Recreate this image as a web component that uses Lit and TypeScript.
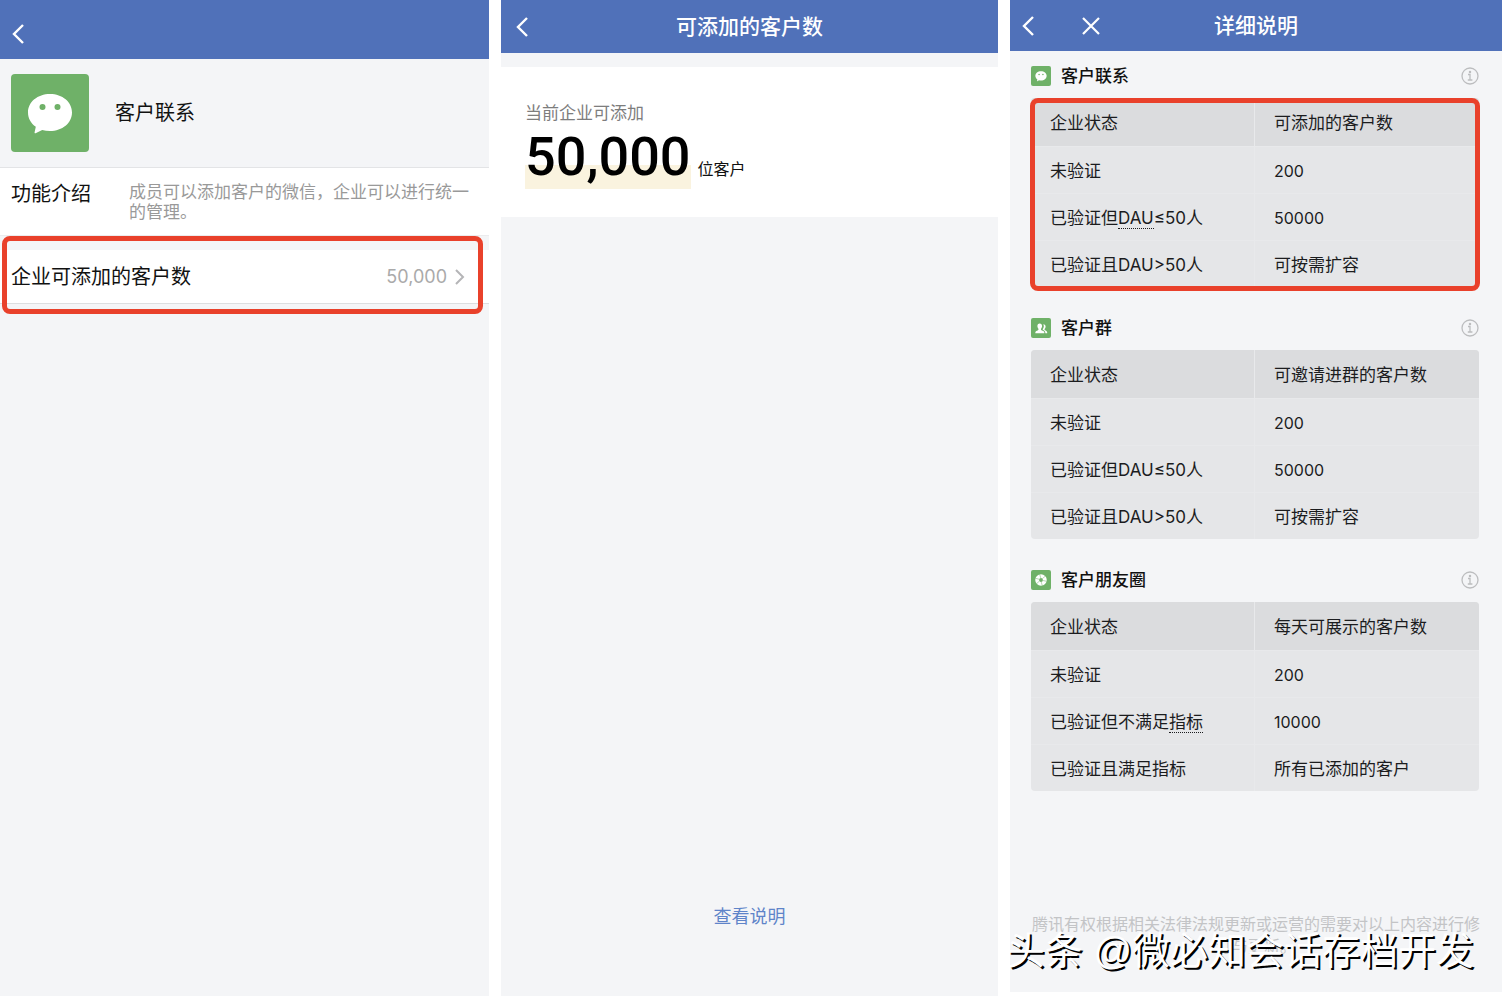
import { LitElement, html, svg, css } from "lit";
import { customElement, property } from "lit/decorators.js";

type Glyph = "chat" | "group" | "moments";

interface Quota {
  icon: Glyph;
  title: string;
  column: string;
  marked?: boolean;
  rows: { before: string; term?: string; after?: string; value: string }[];
}

const quotas: Quota[] = [
  {
    icon: "chat",
    title: "客户联系",
    column: "可添加的客户数",
    marked: true,
    rows: [
      { before: "未验证", value: "200" },
      { before: "已验证但", term: "DAU", after: "≤50人", value: "50000" },
      { before: "已验证且DAU>50人", value: "可按需扩容" },
    ],
  },
  {
    icon: "group",
    title: "客户群",
    column: "可邀请进群的客户数",
    rows: [
      { before: "未验证", value: "200" },
      { before: "已验证但DAU≤50人", value: "50000" },
      { before: "已验证且DAU>50人", value: "可按需扩容" },
    ],
  },
  {
    icon: "moments",
    title: "客户朋友圈",
    column: "每天可展示的客户数",
    rows: [
      { before: "未验证", value: "200" },
      { before: "已验证但不满足", term: "指标", value: "10000" },
      { before: "已验证且满足指标", value: "所有已添加的客户" },
    ],
  },
];

const glyphs = {
  chat: svg`
    <path fill="#fff" d="M39 20c12.400 0 22 8 22 18.500S51.400 57 39 57c-2.800 0-5.400-.4-7.800-1.100L24.600 59.200c-.7.300-1.200-.2-1-.9l1.200-5.500C19.900 49.400 17 44.300 17 38.500 17 28 26.600 20 39 20Z"/>
    <circle cx="31.500" cy="33" r="3" fill="#6fb168"/>
    <circle cx="46.500" cy="33" r="3" fill="#6fb168"/>`,
  group: svg`
    <path fill="#fff" d="M34 21c6 0 9 4 9 10 0 5-2 8-4 11v4c0 2 12 4 13 10v3H17v-3c1-6 12-8 12-10v-4c-2-3-4-6-4-11 0-6 3-10 9-10Z"/>
    <path fill="#fff" d="M48 24c6 0 9 4 9 9 0 4-2 7-4 10v3c0 2 9 4 10 9v4h-7c0-8-5-10-10-13v-3c2-3 4-6 4-11 0-3-1-6-2-8Z"/>`,
  moments: svg`
    <circle cx="39" cy="39" r="15" fill="none" stroke="#fff" stroke-width="15"/>
    <path stroke="#6fb168" stroke-width="2" d="M45 33 56 24M47 41l14 3M40 47l4 14M32 44 21 54M31 36l-14-4M38 31l-4-14"/>`,
};

const base = css`
  * {
    box-sizing: border-box;
  }
  button {
    display: flex;
    padding: 0;
    border: 0;
    background: none;
    color: inherit;
    font: inherit;
    cursor: pointer;
  }
  svg {
    display: block;
  }
`;

@customElement("app-glyph")
export class AppGlyph extends LitElement {
  @property() name: Glyph = "chat";

  static styles = css`
    :host {
      display: block;
      flex: none;
      width: 20px;
      height: 20px;
      border-radius: 2px;
      overflow: hidden;
      background: #6fb168;
    }
    svg {
      display: block;
      width: 100%;
      height: 100%;
    }
  `;

  render() {
    return html`<svg viewBox="0 0 78 78" aria-hidden="true">${glyphs[this.name]}</svg>`;
  }
}

@customElement("nav-bar")
export class NavBar extends LitElement {
  @property() heading = "";
  @property({ type: Boolean }) closable = false;

  static styles = [
    base,
    css`
      :host {
        display: grid;
        grid-template-columns: 1fr auto 1fr;
        align-items: center;
        flex: none;
        padding: 0 12px;
        background: #5071b9;
        color: #fff;
      }
      .actions {
        display: flex;
        align-items: center;
        gap: 48px;
      }
      .title {
        margin: 0;
        font-size: 21px;
        line-height: 30px;
        font-weight: 500;
      }
    `,
  ];

  render() {
    return html`
      <div class="actions">
        <button aria-label="返回">
          <svg width="12" height="20" viewBox="0 0 12 20" fill="none" stroke="#fff" stroke-width="2.400">
            <path d="M11 1 2 10l9 9" />
          </svg>
        </button>
        ${this.closable
          ? html`<button aria-label="关闭">
              <svg width="18" height="18" viewBox="0 0 18 18" fill="none" stroke="#fff" stroke-width="2.200">
                <path d="m1 1 16 16M17 1 1 17" />
              </svg>
            </button>`
          : ""}
      </div>
      <h1 class="title">${this.heading}</h1>
    `;
  }
}

@customElement("quota-section")
export class QuotaSection extends LitElement {
  @property({ attribute: false }) quota!: Quota;

  static styles = [
    base,
    css`
      :host {
        display: block;
      }
      .head {
        display: flex;
        align-items: center;
        gap: 10px;
        height: 20px;
        margin-bottom: 12px;
      }
      .title {
        flex: 1;
        margin: 0;
        font-size: 17px;
        line-height: 20px;
        font-weight: 500;
      }
      .frame {
        position: relative;
      }
      .marked::after {
        content: "";
        position: absolute;
        inset: 0 -1px -4px;
        border: 5px solid #e9412b;
        border-radius: 8px;
        pointer-events: none;
      }
      .table {
        width: 100%;
        table-layout: fixed;
        border-collapse: separate;
        border-spacing: 0;
        border-radius: 4px;
        overflow: hidden;
        background: #e5e6e8;
        font-size: 17px;
        line-height: 24px;
        color: #1b1c1e;
      }
      .table th,
      .table td {
        height: 47px;
        padding: 1px 19px 0;
        text-align: left;
        font-weight: 400;
        border-bottom: 1px solid #e8e9eb;
      }
      .table thead th {
        height: 49px;
        background: #dbdcde;
      }
      .table tbody tr:last-child > * {
        height: 46px;
        border-bottom: 0;
      }
      .table tr > :first-child {
        border-right: 1px solid #e8e9eb;
      }
      .table .number {
        font-size: 16px;
      }
      .term {
        text-decoration: none;
        border-bottom: 1px dotted #1b1c1e;
      }
    `,
  ];

  render() {
    const q = this.quota;
    return html`
      <div class="head">
        <app-glyph name=${q.icon}></app-glyph>
        <h2 class="title">${q.title}</h2>
        <button aria-label="说明">
          <svg width="18" height="18" viewBox="0 0 18 18" fill="none" stroke="#bcbdbf" stroke-width="1.300">
            <circle cx="9" cy="9" r="8" />
            <path d="M7 7.500h2v5.500M6.800 13h4.600" />
            <circle cx="9" cy="5" r=".6" fill="#bcbdbf" />
          </svg>
        </button>
      </div>
      <div class="frame ${q.marked ? "marked" : ""}">
        <table class="table">
          <thead>
            <tr>
              <th scope="col">企业状态</th>
              <th scope="col">${q.column}</th>
            </tr>
          </thead>
          <tbody>
            ${q.rows.map(
              (r) => html`<tr>
                <th scope="row">${r.before}${r.term ? html`<abbr class="term">${r.term}</abbr>` : ""}${r.after ?? ""}</th>
                <td class=${/^\d+$/.test(r.value) ? "number" : ""}>${r.value}</td>
              </tr>`,
            )}
          </tbody>
        </table>
      </div>
    `;
  }
}

@customElement("app-root")
export class AppRoot extends LitElement {
  static styles = [
    base,
    css`
      :host {
        display: grid;
        grid-template-columns: 489fr 497fr 492fr;
        gap: 12px;
        box-sizing: border-box;
        min-height: 100vh;
        padding-bottom: 2px;
        background: #fff;
        color: #111;
        font-family: Inter, "Noto Sans CJK SC", sans-serif;
      }
      .panel {
        display: flex;
        flex-direction: column;
        min-width: 0;
        background: #f4f5f7;
      }
      .bar-contact {
        height: 59px;
        padding-top: 8px;
      }
      .bar-count {
        height: 53px;
        padding: 0 15px;
      }
      .bar-detail {
        height: 51px;
      }

      .app {
        display: flex;
        align-items: center;
        gap: 26px;
        padding: 15px 11px;
        border-bottom: 1px solid #e3e4e6;
      }
      .app-icon {
        width: 78px;
        height: 78px;
        border-radius: 4px;
      }
      .app-name {
        margin: 0;
        font-size: 20px;
        line-height: 28px;
        font-weight: 400;
      }
      .intro {
        display: flex;
        gap: 38px;
        padding: 14px 16px 13px 11px;
        background: #fff;
        border-bottom: 1px solid #ebecee;
      }
      .intro-label {
        flex: none;
        margin: 0;
        font-size: 20px;
        line-height: 24px;
        font-weight: 400;
      }
      .intro-text {
        margin: 0;
        font-size: 17px;
        line-height: 20px;
        color: #999;
      }
      .callout {
        position: relative;
        padding: 14px 0 10px;
      }
      .callout::after {
        content: "";
        position: absolute;
        inset: 0 6px 0 2px;
        border: 5px solid #e9412b;
        border-radius: 8px;
        pointer-events: none;
      }
      .callout .entry {
        align-items: center;
        width: 100%;
        height: 54px;
        padding: 0 24px 0 11px;
        background: #fff;
        border-bottom: 1px solid #dddee0;
      }
      .entry-label {
        flex: 1;
        text-align: left;
        font-size: 20px;
        line-height: 28px;
      }
      .entry-value {
        margin-right: 8px;
        font-size: 18px;
        line-height: 28px;
        color: #aaa;
      }

      .summary {
        margin-top: 14px;
        padding: 34px 24px 28px;
        background: #fff;
      }
      .summary-label {
        margin: 0;
        font-size: 17px;
        line-height: 24px;
        color: #7d7d7d;
      }
      .summary-line {
        display: flex;
        align-items: baseline;
        gap: 7px;
        margin: 0;
        font-size: 16px;
      }
      .total {
        font-family: Roboto, Inter, sans-serif;
        font-size: 54px;
        line-height: 64px;
        font-weight: 500;
        color: #000;
        background: linear-gradient(transparent 40px, #faf3df 40px);
      }
      .explain {
        align-self: center;
        margin: auto 0 67px;
        font-size: 18px;
        line-height: 24px;
        color: #5f84c9;
        text-decoration: none;
      }

      .detail {
        position: relative;
        margin-bottom: 4px;
      }
      .quotas {
        display: flex;
        flex-direction: column;
        gap: 31px;
        padding: 15px 23px 0 21px;
      }
      .legal {
        margin: auto 0 35px;
        padding: 0 22px;
        font-size: 16px;
        line-height: 22px;
        text-align: center;
        color: #c3c4c6;
      }
      .watermark {
        position: absolute;
        right: 28px;
        bottom: 14px;
        margin: 0;
        font-family: "Liberation Sans", "Noto Sans CJK SC", sans-serif;
        font-size: 38px;
        line-height: 54px;
        white-space: nowrap;
        color: #fff;
        text-shadow: 2px 2px 0 #000;
        pointer-events: none;
      }
    `,
  ];

  render() {
    return html`
      <section class="panel">
        <nav-bar class="bar-contact"></nav-bar>
        <div class="app">
          <app-glyph class="app-icon" name="chat"></app-glyph>
          <h2 class="app-name">客户联系</h2>
        </div>
        <div class="intro">
          <h3 class="intro-label">功能介绍</h3>
          <p class="intro-text">成员可以添加客户的微信，企业可以进行统一的管理。</p>
        </div>
        <div class="callout">
          <button class="entry">
            <span class="entry-label">企业可添加的客户数</span>
            <span class="entry-value">50,000</span>
            <svg width="10" height="16" viewBox="0 0 10 16" fill="none" stroke="#b5b5b7" stroke-width="2">
              <path d="m1 1 7 7-7 7" />
            </svg>
          </button>
        </div>
      </section>

      <section class="panel">
        <nav-bar class="bar-count" heading="可添加的客户数"></nav-bar>
        <div class="summary">
          <p class="summary-label">当前企业可添加</p>
          <p class="summary-line"><strong class="total">50,000</strong><span>位客户</span></p>
        </div>
        <a class="explain" href="#detail">查看说明</a>
      </section>

      <section class="panel detail" id="detail">
        <nav-bar class="bar-detail" heading="详细说明" closable></nav-bar>
        <div class="quotas">
          ${quotas.map((q) => html`<quota-section .quota=${q}></quota-section>`)}
        </div>
        <p class="legal">腾讯有权根据相关法律法规更新或运营的需要对以上内容进行修订与更新。</p>
        <p class="watermark">头条 @微必知会话存档开发</p>
      </section>
    `;
  }
}
